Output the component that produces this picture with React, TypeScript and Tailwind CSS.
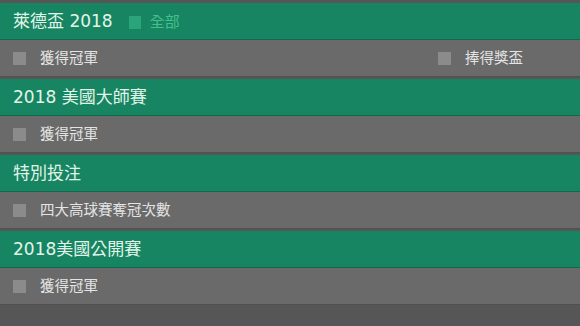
import { ReactNode } from 'react'

type Option = { label: string }

type Group = {
  title: ReactNode
  options: Option[]
}

const GROUPS: Group[] = [
  {
    title: (
      <>
        <span>萊德盃 2018</span>
        <span className="ml-[16px] inline-block w-[12px] h-[13px] bg-[#2aa57a]" />
        <span className="ml-[9px] text-[15px] text-[#44c08c]">全部</span>
      </>
    ),
    options: [{ label: '獲得冠軍' }, { label: '捧得獎盃' }],
  },
  { title: '2018 美國大師賽', options: [{ label: '獲得冠軍' }] },
  { title: '特別投注', options: [{ label: '四大高球賽奪冠次數' }] },
  { title: '2018美國公開賽', options: [{ label: '獲得冠軍' }] },
]

function Checkbox() {
  return <span className="inline-block w-[13px] h-[13px] bg-[#8b8b8b] shrink-0" />
}

export default function App() {
  return (
    <div
      className="w-[580px] h-[326px] bg-[#565656] pt-[3px] overflow-hidden"
      style={{ fontFamily: '"DejaVu Sans", "Noto Sans CJK TC", sans-serif' }}
    >
      {GROUPS.map((group, i) => (
        <div key={i} className="mb-[2px] last:mb-0">
          <div className="h-[37px] bg-[#178562] border-b border-[#0f6a4c] flex items-center pl-[13px] pt-[2px] text-[17px] text-[#e2f5ea]">
            {group.title}
          </div>
          <div className="h-[37px] bg-[#6a6a6a] border-b border-[#505050] flex items-center pt-[1px] text-[14.5px] text-[#e4e4e4]">
            {group.options.map((opt, j) => (
              <div key={j} className={j === 0 ? 'w-[425px] flex items-center pl-[13px]' : 'flex items-center pl-[13px]'}>
                <Checkbox />
                <span className="ml-[14px]">{opt.label}</span>
              </div>
            ))}
          </div>
        </div>
      ))}
    </div>
  )
}
